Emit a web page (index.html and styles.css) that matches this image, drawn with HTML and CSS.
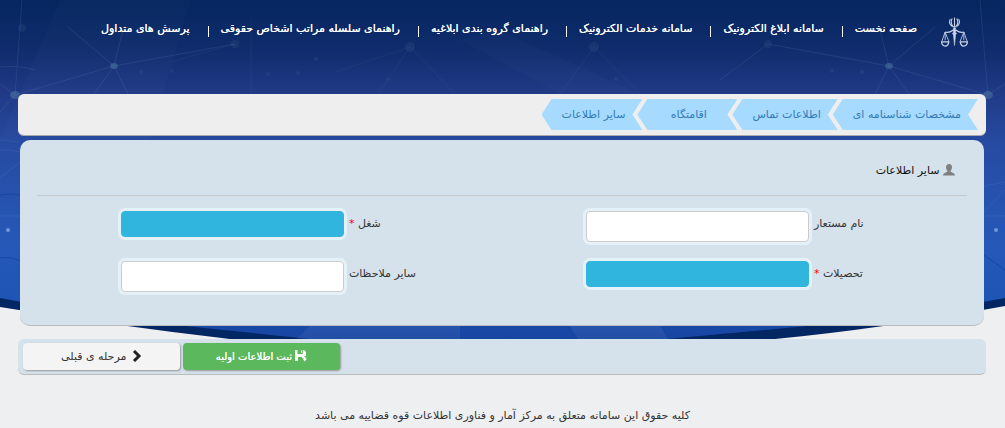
FILE: index.html
```
<!DOCTYPE html>
<html lang="fa" dir="rtl">
<head>
<meta charset="utf-8">
<meta name="viewport" content="width=device-width, initial-scale=1">
<title>سایر اطلاعات</title>
<link rel="stylesheet" href="styles.css">
</head>
<body>
<svg class="backdrop" viewBox="0 0 1005 350" preserveAspectRatio="none" aria-hidden="true">
  <defs>
    <linearGradient id="sky" x1="0" y1="0" x2="0" y2="1">
      <stop offset="0" stop-color="#05265f"/>
      <stop offset=".14" stop-color="#102c6c"/>
      <stop offset=".27" stop-color="#203a86"/>
      <stop offset=".42" stop-color="#264ba2"/>
      <stop offset=".7" stop-color="#2658b8"/>
      <stop offset=".86" stop-color="#1f55b5"/>
      <stop offset="1" stop-color="#15429f"/>
    </linearGradient>
  </defs>
  <path fill="#032763" d="M0 0H1005V306Q880 329 775 339Q502 362 230 339Q110 325 0 307Z"/>
  <path fill="url(#sky)" d="M0 0H1005V298Q900 317 807 326L667 339Q502 350 310 339L195 327Q90 315 0 298Z"/>
  <g fill="#fff" fill-opacity=".015">
    <path d="M60 0H190L150 140H0Z"/>
    <path d="M460 40L560 94H640L500 30Z"/>
  </g>
  <g fill="#fff" fill-opacity=".06">
    <path d="M570 326H660L668 339H578Z"/>
    <path d="M310 326H460V345H290Z"/>
  </g>
  <g fill="none" stroke="#7fa6c8" stroke-opacity=".14">
    <path d="M22 0L15 95L114 66L235 44M114 66L68 27M114 66L94 94M114 66L128 94M114 66L123 30M0 112L15 95L0 84M0 67Q20 65 35 70"/>
    <path stroke-opacity=".07" d="M235 44L170 62M251 20V94M410 47L335 72M410 47L455 94M410 47L378 94M594 47L560 94M594 47L640 94"/>
    <path d="M768 44L889 66L988 95L980 0M889 66L935 27M889 66L875 94M889 66L909 94M889 66L880 30M988 95L1005 84M768 44L720 80"/>
    <path d="M0 140L20 142M0 150Q10 149 20 152M0 178L20 162M0 216H20M984 186L1005 182M984 216H1005M984 212L1005 190"/>
  </g>
  <path fill="none" stroke="#0b3a92" stroke-opacity=".5" d="M0 195Q10 193 20 195M0 258Q10 256 20 261M984 255L1005 270"/>
  <g fill="#4f7aa6" fill-opacity=".5">
    <ellipse cx="114" cy="66" rx="4" ry="3"/>
    <ellipse cx="15" cy="95" rx="5" ry="4"/>
    <ellipse cx="889" cy="66" rx="4" ry="3"/>
    <ellipse cx="988" cy="95" rx="5" ry="4"/>
  </g>
  <g fill="#6f86a6" fill-opacity=".12">
    <circle cx="235" cy="44" r="4"/>
    <circle cx="410" cy="47" r="5"/>
    <circle cx="594" cy="47" r="5"/>
    <circle cx="768" cy="44" r="4"/>
    <circle cx="22" cy="28" r="4"/>
    <circle cx="141" cy="72" r="2"/>
    <circle cx="172" cy="71" r="2"/>
    <circle cx="268" cy="74" r="2"/>
    <circle cx="298" cy="73" r="2"/>
    <circle cx="316" cy="59" r="2"/>
    <circle cx="388" cy="79" r="2"/>
    <circle cx="616" cy="79" r="2"/>
    <circle cx="832" cy="71" r="2"/>
    <circle cx="862" cy="72" r="2"/>
  </g>
  <g fill="#9fc3ea" fill-opacity=".6">
    <circle cx="8" cy="230" r="2"/>
    <circle cx="996" cy="230" r="2"/>
  </g>
</svg>

<header class="top">
  <svg class="emblem" viewBox="0 0 26 30" fill="none" stroke="#ccd6e8" aria-hidden="true">
    <path stroke-width="1" d="M13 1V10M10.800 2Q8.500 6 11.500 9.500M15.200 2Q17.500 6 14.500 9.500M9 2.500Q6.800 7 10.500 9.500M17 2.500Q19.200 7 15.500 9.500M11 10H15"/>
    <path stroke-width="1.200" d="M4 15Q8 16 11 13.500H15Q18 16 22 15"/>
    <path fill="#ccd6e8" stroke-width=".5" d="M12 11H14V16H15L14 18L13 28L12 18L11 16H12Z"/>
    <path stroke-width=".8" d="M4 15L.8 24M4 15L7.500 24M22 15L18.500 24M22 15L25.200 24M4 15V23M22 15V23"/>
    <path stroke-width="1.200" d="M.5 24.500H7.500Q7 28.500 4 28.500T.5 24.500ZM18.500 24.500H25.500Q25 28.500 22 28.500T18.500 24.500Z"/>
  </svg>
  <nav class="menu">
    <a href="#">صفحه نخست</a>
    <a href="#">سامانه ابلاغ الکترونیک</a>
    <a href="#">سامانه خدمات الکترونیک</a>
    <a href="#">راهنمای گروه بندی ابلاغیه</a>
    <a href="#">راهنمای سلسله مراتب اشخاص حقوقی</a>
    <a href="#">پرسش های متداول</a>
  </nav>
</header>

<main>
  <div class="steps">
    <a class="step" href="#">مشخصات شناسنامه ای</a>
    <a class="step" href="#">اطلاعات تماس</a>
    <a class="step" href="#">اقامتگاه</a>
    <a class="step" href="#">سایر اطلاعات</a>
  </div>

  <form id="info">
    <section class="panel">
      <h1 class="title">
        <svg class="icon" viewBox="0 0 12 12" fill="#808080" aria-hidden="true"><path d="M6 0C8 0 9 1.400 9 3.200C9 4.800 8.300 6 7.600 6.700V7.800C9 8.600 12 9.200 12 11.500H0C0 9.200 3 8.600 4.400 7.800V6.700C3.700 6 3 4.800 3 3.200C3 1.400 4 0 6 0Z"/></svg>
        سایر اطلاعات
      </h1>
      <div class="fields">
        <div class="field">
          <label for="alias">نام مستعار</label>
          <input id="alias" type="text">
        </div>
        <div class="field">
          <label for="job">شغل <span class="req">*</span></label>
          <input id="job" class="filled" type="text">
        </div>
        <div class="field">
          <label for="edu">تحصیلات <span class="req">*</span></label>
          <input id="edu" class="filled" type="text">
        </div>
        <div class="field">
          <label for="notes">سایر ملاحظات</label>
          <input id="notes" type="text">
        </div>
      </div>
    </section>

    <div class="actions">
      <button class="btn save" type="submit">
        <svg class="icon" viewBox="0 0 12 12" fill="#fff" aria-hidden="true"><path d="M0 0H2.500V4H8V0H9L11 2V6H9V8H7V7H3V11H0ZM6 .5H7.300V3H6ZM9 6.500H10.500V8.500H12L9.700 11.500L7.500 8.500H9Z"/></svg>
        ثبت اطلاعات اولیه
      </button>
      <button class="btn back" type="button">
        <svg class="icon" viewBox="0 0 12 12" fill="none" stroke="#222" stroke-width="3" aria-hidden="true"><path d="M4 1L9 6L4 11"/></svg>
        مرحله ی قبلی
      </button>
    </div>
  </form>
</main>

<footer>کلیه حقوق این سامانه متعلق به مرکز آمار و فناوری اطلاعات قوه قضاییه می باشد</footer>
</body>
</html>
```
FILE: styles.css
```
*{box-sizing:border-box}
body{margin:0;background:#eeeff1;color:#333;font-family:"DejaVu Sans",sans-serif;font-size:11px;line-height:16px;position:relative}
a{text-decoration:none}
.backdrop{position:absolute;top:0;left:0;width:100%;height:350px;z-index:-1}

.top{display:flex;align-items:flex-start;padding:16px 37px 0;height:94px}
.emblem{width:27px;height:32px;margin-left:24px}
.menu{display:flex;padding-top:5px}
.menu a{color:#fff;text-shadow:0 0 0 #fff;white-space:nowrap}
.menu a+a{margin-right:12px;padding-right:19px;background:linear-gradient(#fff,#fff) right 5px/1px 11px no-repeat}

main{margin:0 19px 0 18px}
.steps{display:flex;padding:5px 8px 5px 0;background:#eee;border-bottom:1px solid #aaa;border-radius:6px}
.step{min-width:100px;height:31px;padding:0 17px 0 20px;line-height:31px;text-align:center;white-space:nowrap;color:#337ab7;background:#a6dbff;
clip-path:polygon(10px 0,100% 0,calc(100% - 10px) 50%,100% 100%,10px 100%,0 50%)}
.step+.step{margin-right:-5px}

.panel{margin:4px 2px 13px;height:186px;padding:0 17px;background:#d5e2eb;border-bottom:1px solid #bbb;border-radius:10px}
.title{margin:0 0 15px;padding:23px 12px 16px 0;border-bottom:1px solid #c6c9cc;font-size:11px;font-weight:normal;line-height:16px;color:#111}
.fields{display:grid;grid-template-columns:1fr 1fr;row-gap:19px}
.field{display:grid;grid-template-columns:34% 48%;align-items:start;height:31px}
.field label{padding:5px 0 0 5px;text-align:left;white-space:nowrap}
.field input{width:100%;height:31px;border:1px solid #ccc;border-radius:4px;background:#fff;box-shadow:0 0 0 3px #e5f1f9}
.field input.filled{height:26px;border-color:#2fb5de;background:#2fb5de}
.req{color:#f00}

.actions{display:flex;justify-content:flex-end;gap:3px;padding:4px 5px;background:#d5e2eb;border-bottom:1px solid #bbb;border-radius:6px}
.btn{width:157px;height:27px;padding:0;border:0;border-radius:4px;font:inherit;box-shadow:1px 1px 2px #999}
.save{background:#5cb85c;color:#fff;font-size:10px;text-shadow:0 0 0 #fff}
.back{background:#f4f4f4;color:#333}
.icon{width:12px;height:12px;vertical-align:-2px}

footer{padding:33px 0 4px;text-align:center;font-size:11px}
```
